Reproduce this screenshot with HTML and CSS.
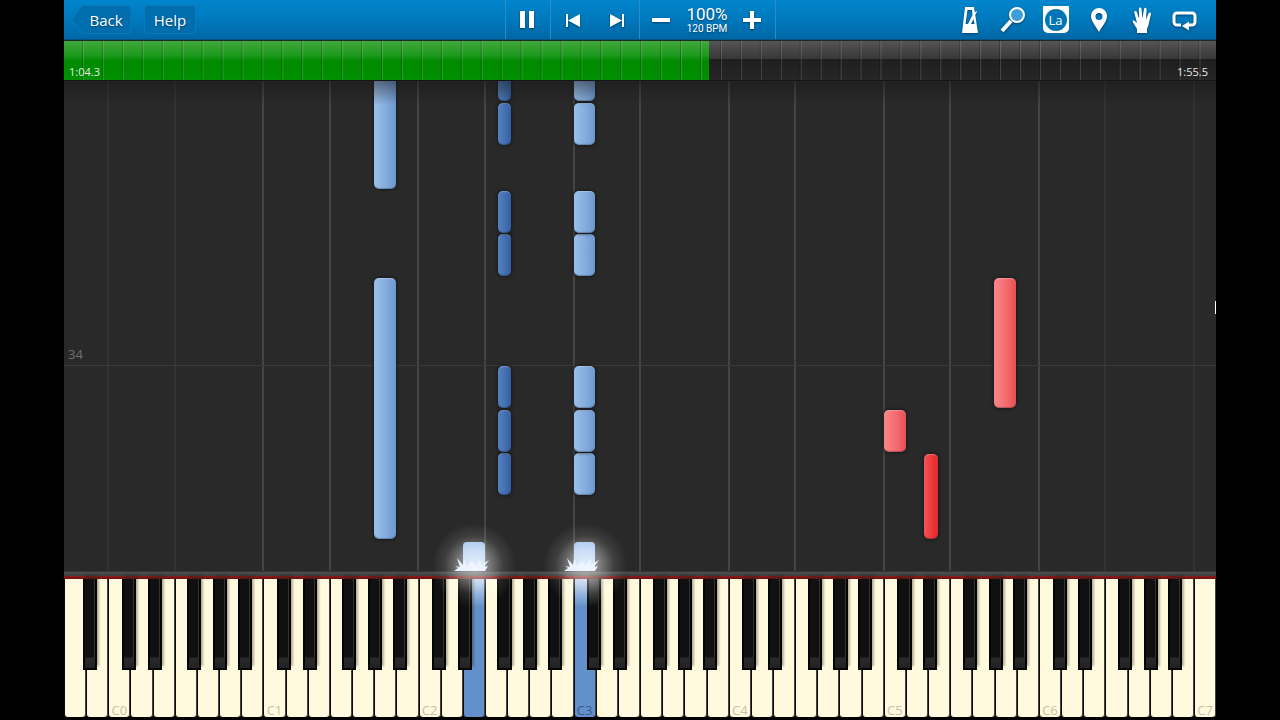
FILE: index.html
```html
<!DOCTYPE html>
<html lang="en">
<head>
<meta charset="utf-8">
<meta name="viewport" content="width=device-width, initial-scale=1">
<title>Piano player</title>
<link rel="stylesheet" href="styles.css">
</head>
<body>
<main class="app">
  <header class="toolbar">
    <nav class="toolbar-left">
      <button class="nav-btn back" type="button">
        <svg class="back-shape" viewBox="0 0 60 29" preserveAspectRatio="none" aria-hidden="true"><path d="M12 .5H55a4 4 0 0 1 4 4V24.500a4 4 0 0 1-4 4H12L8 26 0 14.500 8 3Z"/></svg>
        <span class="back-text">Back</span>
      </button>
      <button class="nav-btn help" type="button">Help</button>
    </nav>
    <div class="transport">
      <div class="group">
        <button class="icon-btn" type="button" aria-label="Pause"><svg width="24" height="24" viewBox="0 0 24 24"><path d="M4 3h5v17H4zM13 3h5v17h-5z"/></svg></button>
      </div>
      <div class="group">
        <button class="icon-btn" type="button" aria-label="Previous"><svg width="24" height="24" viewBox="0 0 24 24"><path d="M5 6h2v13H5zM19 6v13L7 12.500z"/></svg></button>
        <button class="icon-btn" type="button" aria-label="Next"><svg width="24" height="24" viewBox="0 0 24 24"><path d="M17 6h2v13h-2zM5 6v13l12-6.500z"/></svg></button>
      </div>
      <div class="group">
        <button class="icon-btn" type="button" aria-label="Slower"><svg width="24" height="24" viewBox="0 0 24 24"><path d="M2 10h18v4H2z"/></svg></button>
        <div class="tempo"><span class="percent">100%</span><span class="bpm">120 BPM</span></div>
        <button class="icon-btn" type="button" aria-label="Faster"><svg width="24" height="24" viewBox="0 0 24 24"><path d="M2 10h7V3h4v7h7v4h-7v7h-4v-7H2z"/></svg></button>
      </div>
    </div>
    <div class="tools">
      <button class="icon-btn" type="button" aria-label="Metronome"><svg width="28" height="28" viewBox="0 0 28 28"><path fill-rule="evenodd" d="M9 1h9l4 26H6zM11.500 4L9.500 18H12L16.500 9 16 4zM17.500 13L15 18h3.500z"/><path d="M12 19L20 5l1 .6L14 19z"/></svg></button>
      <button class="icon-btn" type="button" aria-label="Zoom"><svg width="28" height="28" viewBox="0 0 28 28"><path d="M12 15L3 25" class="thick"/><circle cx="18" cy="9" r="7" class="lens"/></svg></button>
      <button class="icon-btn" type="button" aria-label="Note names"><span class="la"><span class="la-disc">La</span></span></button>
      <button class="icon-btn" type="button" aria-label="Bookmark"><svg width="28" height="28" viewBox="0 0 28 28"><path fill-rule="evenodd" d="M14 2a8 8 0 0 1 8 8c0 5-4 9-8 16C10 19 6 15 6 10a8 8 0 0 1 8-8zm0 5a3.500 3.500 0 1 0 0 7 3.500 3.500 0 0 0 0-7z"/></svg></button>
      <button class="icon-btn" type="button" aria-label="Hands"><svg width="28" height="28" viewBox="0 0 28 28"><path d="M9 27V23L5 16.500c-1-2 .3-3 1.800-1.500L9 17 6.300 6.800C6 4.500 8.300 4.200 8.900 6.300L11.200 13 10.800 3.300C10.800 1 13.400 1 13.600 3.300L14.300 12.500 16 3.300C16.400 1 18.800 1.500 18.600 3.800L18 13.500 20.500 7.500C21.400 5.500 23.500 6.400 22.900 8.500L20.500 19 19 23v4z"/></svg></button>
      <button class="icon-btn" type="button" aria-label="Loop"><svg width="28" height="28" viewBox="0 0 28 28"><path class="loop" d="M10 19H6a3 3 0 0 1-3-3V10a3 3 0 0 1 3-3H21a3 3 0 0 1 3 3v6a3 3 0 0 1-3 3H18"/><path d="M11 20l7-4.500v9z"/></svg></button>
    </div>
  </header>

  <section class="timeline" aria-label="Song position">
    <div class="played"></div>
    <span class="time now">1:04.3</span>
    <span class="time total">1:55.5</span>
  </section>

  <section class="stage" aria-label="Falling notes">
    <div class="grid" id="grid"></div>
    <div class="bar-line"><span class="bar-number">34</span></div>
    <div class="notes" id="notes"></div>
    <div class="pointer"></div>
  </section>

  <div class="rail"></div>
  <section class="keyboard" id="keyboard" aria-label="Keyboard"></section>
</main>
<script src="app.js"></script>
</body>
</html>
```

FILE: styles.css
```css
* {
  box-sizing: border-box;
}

body {
  margin: 0;
  background: #000;
  font-family: "Open Sans", "Noto Sans", sans-serif;
  color: #fff;
}

button {
  margin: 0;
  padding: 0;
  border: 0;
  background: none;
  color: inherit;
  font: inherit;
  cursor: pointer;
}

.app {
  display: flex;
  flex-direction: column;
  width: 90%;
  min-height: 100vh;
  margin: 0 auto;
  padding-bottom: 2px;
  overflow: hidden;
}

/* Toolbar */
.toolbar {
  display: grid;
  grid-template-columns: 1fr auto 1fr;
  height: 40px;
  background: linear-gradient(#0085cc, #0079bd 50%, #0067a5);
  border-bottom: 1px solid #005488;
}

.toolbar-left {
  display: flex;
  align-items: center;
  gap: 12px;
  padding-left: 8px;
}

.nav-btn {
  position: relative;
  height: 29px;
  font-size: 15px;
  line-height: 28px;
  text-shadow: 0 1px 2px #00406a;
}

.back {
  width: 60px;
  padding-left: 8px;
}

.back-shape {
  position: absolute;
  inset: 0;
  width: 100%;
  height: 100%;
  fill: #006eae;
  stroke: #0d7ab8;
}

.back-text {
  position: relative;
}

.help {
  width: 52px;
  background: #006eae;
  border: 1px solid #0d7ab8;
  border-radius: 4px;
}

.transport {
  display: flex;
  border-right: 1px solid #2b8dc3;
}

.group {
  display: flex;
  align-items: center;
  border-left: 1px solid #2b8dc3;
}

.icon-btn {
  display: flex;
  align-items: center;
  justify-content: center;
  width: 44px;
  height: 39px;
}

.icon-btn svg {
  fill: #fff;
  filter: drop-shadow(0 1px 1px #00406a);
}

.tempo {
  display: flex;
  flex-direction: column;
  align-items: center;
  width: 47px;
  font-family: Roboto, "Open Sans", sans-serif;
  text-shadow: 0 1px 2px #00406a;
}

.percent {
  font-size: 17px;
  line-height: 18px;
}

.bpm {
  font-size: 10px;
  line-height: 12px;
}

.tools {
  display: flex;
  justify-content: flex-end;
  padding-right: 10px;
}

.tools .icon-btn {
  width: 43px;
}

.icon-btn .thick {
  fill: none;
  stroke: #fff;
  stroke-width: 4;
}

.icon-btn .lens {
  fill: #3c9fda;
  stroke: #fff;
  stroke-width: 2;
}

.icon-btn .loop {
  fill: none;
  stroke: #fff;
  stroke-width: 3;
}

.la {
  display: flex;
  align-items: center;
  justify-content: center;
  width: 26px;
  height: 27px;
  background: #fff;
  border-radius: 1px 1px 5px 5px;
}

.la-disc {
  width: 22px;
  height: 22px;
  border-radius: 50%;
  background: #0074b5;
  font-size: 13px;
  line-height: 22px;
  text-align: center;
}

/* Timeline */
.timeline {
  position: relative;
  display: flex;
  align-items: flex-end;
  justify-content: space-between;
  height: 41px;
  padding: 0 8px 0 5px;
  border-top: 1px solid #1d2a22;
  border-bottom: 1px solid #151515;
  background: linear-gradient(#555, #383838 45%, #1f1f1f 47%, #262626);
}

.timeline::after {
  content: "";
  position: absolute;
  inset: 0;
  background: linear-gradient(to left, rgba(255, 255, 255, .16) 1px, rgba(0, 0, 0, .25) 1px 2px, transparent 2px) 0 0 / 1.7316% 100%;
}

.played {
  position: absolute;
  inset: 0 auto 0 0;
  width: 56%;
  background: linear-gradient(#42a83e, #1b981a 38%, #008a00 52%, #009000);
}

.time {
  position: relative;
  z-index: 1;
  font-size: 11px;
  line-height: 16px;
  color: #e8e8e8;
}

/* Note field */
.stage {
  position: relative;
  flex: 1;
  min-height: 490px;
  overflow: hidden;
  background: #292929;
}

.stage::before {
  content: "";
  position: absolute;
  inset: 0 0 auto;
  z-index: 2;
  height: 24px;
  background: linear-gradient(rgba(24, 24, 24, .5), transparent);
}

.grid {
  position: absolute;
  inset: 0;
}

.grid-line {
  position: absolute;
  top: 0;
  bottom: 0;
  width: 2px;
  margin-left: -1px;
  background: #444;
}

.grid-line.faint {
  background: #333;
}

.bar-line {
  position: absolute;
  left: 0;
  right: 0;
  bottom: 205px;
  padding-left: 4px;
  border-bottom: 1px solid #3b3b3b;
}

.bar-number {
  display: block;
  font-size: 13px;
  line-height: 21px;
  color: #707070;
}

.notes {
  position: absolute;
  inset: 0;
}

.note {
  position: absolute;
  width: 1.9%;
  border-radius: 5px;
  box-shadow: 0 0 3px 1px #181a1e, inset 0 1px 1px rgba(255, 255, 255, .25), inset 0 -1px 1px rgba(0, 0, 0, .25);
}

.note.sharp {
  width: 1.2%;
}

.note.blue {
  background: linear-gradient(to right, #9abfea, #86aede 50%, #6d99d0);
}

.note.blue.sharp {
  background: linear-gradient(to right, #5580bd, #4572b4 50%, #345d9e);
}

.note.red {
  background: linear-gradient(to right, #fa8588, #f2696d 60%, #e84e52);
}

.note.red.sharp {
  background: linear-gradient(to right, #f45357, #ed3639 60%, #e3282c);
}

.note.playing {
  border-radius: 4px 4px 0 0;
  background: linear-gradient(#9dc0ec, #c0d9f8);
  box-shadow: none;
}

.splash {
  position: absolute;
  left: 50%;
  bottom: 0;
  width: 36px;
  height: 15px;
  margin-left: -20px;
  fill: #dbeaff;
}

/* Keyboard */
.rail {
  height: 8px;
  background: linear-gradient(#333 0 1px, #505050 1px, #3c3c3c 5px, #8b1c1c 5px, #6e1111);
}

.keyboard {
  position: relative;
  display: flex;
  height: 139px;
  background: #000;
}

.white-key {
  position: relative;
  flex: 1;
  display: flex;
  align-items: flex-end;
  justify-content: center;
  min-width: 0;
  border-left: 1px solid #0a0a0a;
  border-right: 1px solid #45443c;
  border-bottom: 1px solid #000;
  border-radius: 0 0 4px 4px;
  background: #fffade;
  font-size: 13px;
  line-height: 14px;
  color: #c6c2a8;
}

.white-key.pressed {
  background: linear-gradient(#b5cdec, #6390ca 28px);
  color: #345b8e;
}

.black-key {
  position: absolute;
  top: 0;
  z-index: 1;
  width: 70%;
  height: 91px;
  border: solid #050505;
  border-width: 0 2px 2px;
  background: linear-gradient(#101010 78px, #2a2a2a 79px, #222);
  box-shadow: 2px -4px 2px rgba(40, 34, 20, .35);
}

.black-key::after {
  content: "";
  position: absolute;
  inset: 0 0 10px auto;
  width: 1px;
  background: #333;
}

.white-key.pressed .black-key {
  background: linear-gradient(#444, #101010 28px 78px, #2a2a2a 79px, #222);
}

.after-a { left: 87%; }
.after-c { left: 63%; }
.after-d { left: 81%; }
.after-f { left: 57%; }
.after-g { left: 75%; }

.glow {
  position: absolute;
  z-index: 3;
  top: -56px;
  width: 84px;
  height: 84px;
  margin-left: -31px;
  background: radial-gradient(closest-side, rgba(255, 255, 255, .6), rgba(255, 255, 255, .4) 35%, rgba(255, 255, 255, .1) 70%, transparent);
  pointer-events: none;
}

.pointer {
  position: absolute;
  right: 0;
  top: 220px;
  width: 1px;
  height: 13px;
  background: #fff;
}
```

FILE: app.js
```js
const WHITE_KEYS = 52;
const LETTERS = "abcdefg";
const SHARP_OFFSET = { a: 0.86, c: 0.62, d: 0.81, f: 0.57, g: 0.73 };
const PRESSED = [18, 23];

// key: white key index, sharp: letter offset applied, bottom/height in pixels
const NOTES = [
  { key: 14, bottom: 382, height: 130, color: "blue" },
  { key: 14, bottom: 32, height: 261, color: "blue" },
  { key: 37, bottom: 119, height: 42, color: "red" },
  { key: 38, sharp: true, bottom: 32, height: 85, color: "red" },
  { key: 42, bottom: 163, height: 130, color: "red" },
  { key: 18, bottom: 0, height: 29, color: "blue", playing: true },
  { key: 23, bottom: 0, height: 29, color: "blue", playing: true }
];

for (const bottom of [76, 119, 163, 295, 338, 426, 470]) {
  NOTES.push({ key: 19, sharp: true, bottom, height: 42, color: "blue" });
  NOTES.push({ key: 23, bottom, height: 42, color: "blue" });
}

const SPLASH = '<svg class="splash" viewBox="0 0 36 15"><path d="M0 15L4 12 1 10 6 11 3 2 9 9 10 3 13 10 18 5 22 10 26 3 27 9 35 4 30 11 34 10 31 15Z"/></svg>';

const letterOf = (index) => LETTERS[index % 7];
const percent = (keys) => (keys / WHITE_KEYS) * 100 + "%";

function add(parent, tag, className) {
  const element = document.createElement(tag);
  element.className = className;
  parent.append(element);
  return element;
}

const keyboard = document.getElementById("keyboard");
const grid = document.getElementById("grid");
const notes = document.getElementById("notes");

for (let i = 0; i < WHITE_KEYS; i++) {
  const letter = letterOf(i);
  const key = add(keyboard, "div", "white-key" + (PRESSED.includes(i) ? " pressed" : ""));
  if (letter === "c") key.textContent = "C" + (i - 2) / 7;
  if (letter in SHARP_OFFSET && i < WHITE_KEYS - 1) add(key, "div", "black-key after-" + letter);
  if (letter === "c" || letter === "f") {
    const faint = i < 6 || i > 46 ? " faint" : "";
    add(grid, "div", "grid-line" + faint).style.left = percent(i);
  }
}

for (const index of PRESSED) {
  add(keyboard, "div", "glow").style.left = percent(index);
}

for (const note of NOTES) {
  const classes = ["note", note.color];
  if (note.sharp) classes.push("sharp");
  if (note.playing) classes.push("playing");
  const element = add(notes, "div", classes.join(" "));
  const offset = note.sharp ? SHARP_OFFSET[letterOf(note.key)] : 0;
  element.style.left = percent(note.key + offset);
  element.style.bottom = note.bottom + "px";
  element.style.height = note.height + "px";
  if (note.playing) element.innerHTML = SPLASH;
}
```
